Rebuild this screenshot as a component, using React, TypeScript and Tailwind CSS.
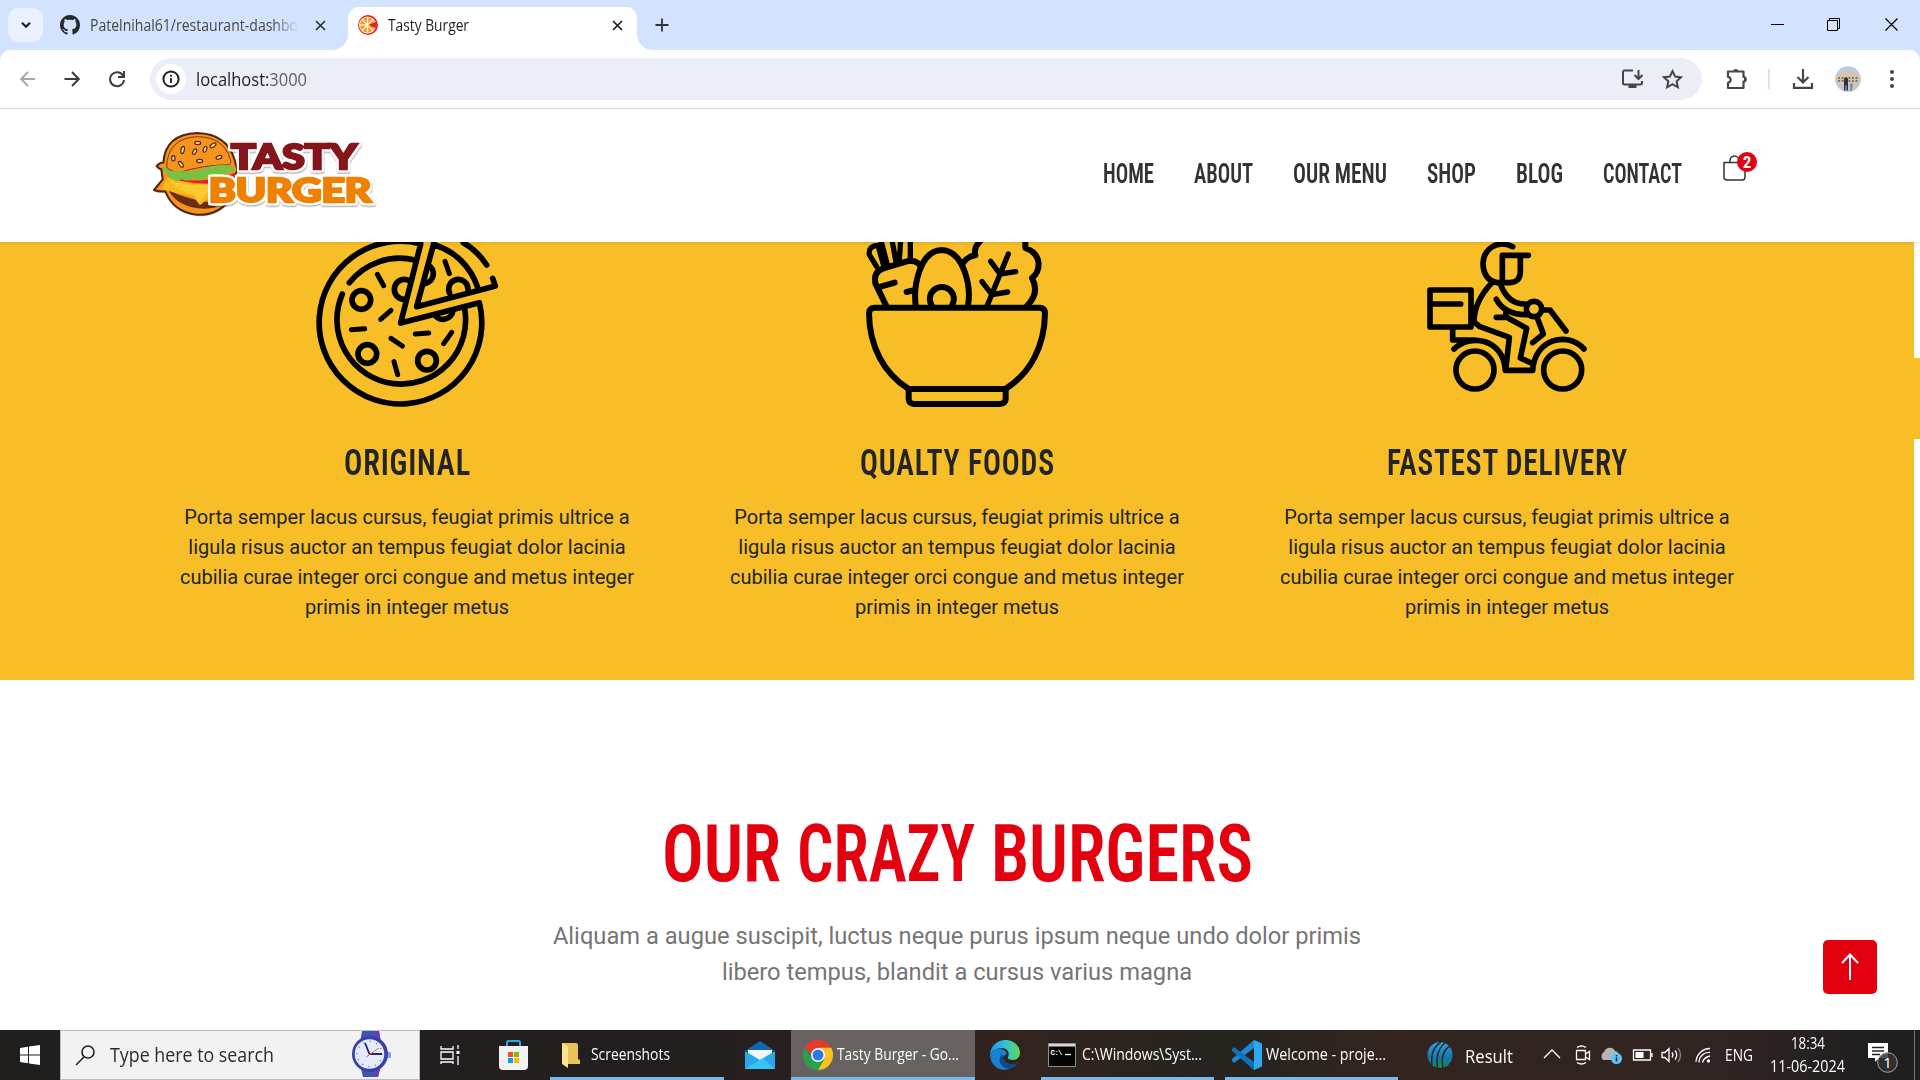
import { useLayoutEffect, useRef, type ReactNode } from "react";

/* Single line of text stretched horizontally to fill the width of its box. */
function Fit({ className, children }: { className: string; children: ReactNode }) {
  const box = useRef<HTMLSpanElement>(null);
  const ink = useRef<HTMLSpanElement>(null);
  useLayoutEffect(() => {
    if (!box.current || !ink.current) return;
    const k = box.current.offsetWidth / ink.current.getBoundingClientRect().width;
    ink.current.style.transform = `scaleX(${k})`;
  }, []);
  return (
    <span ref={box} className={`block shrink-0 whitespace-nowrap ${className}`}>
      <span ref={ink} className="inline-block origin-left">
        {children}
      </span>
    </span>
  );
}

const OSWALD = "font-['Roboto_Condensed','Roboto',sans-serif] [font-stretch:75%]";

function Citrus() {
  return (
    <svg className="size-5 shrink-0" viewBox="0 0 20 20">
      <circle cx="10" cy="10" r="10" fill="#e8202a" />
      <circle cx="9.6" cy="10" r="8.6" fill="#fff3df" />
      <circle cx="9.6" cy="10" r="7.6" fill="#fb9a1c" />
      <path d="M9.6 2v16M1.6 10h16M4 4.4l11.3 11.3M15.3 4.4L4 15.7" stroke="#fff3df" strokeWidth="1.3" />
      <path d="M10 10l8-3v6z" fill="#e8202a" />
    </svg>
  );
}

function TabStrip() {
  return (
    <div className="flex h-[50px] bg-[#d3e3fd]">
      <div className="mt-2 ml-2 flex h-[34px] w-[35px] items-center justify-center rounded-[11px] bg-[#ebf1fe]">
        <svg width="12" height="8" viewBox="0 0 12 8">
          <path d="M2 1.8l4 4 4-4" fill="none" stroke="#1f1f1f" strokeWidth="2.2" />
        </svg>
      </div>
      <div className="ml-[17px] flex h-[50px] w-[288px] items-center">
        <svg className="size-5 shrink-0" viewBox="0 0 16 16" fill="#24292f">
          <path d="M8 0C3.58 0 0 3.58 0 8c0 3.54 2.29 6.53 5.47 7.59.4.07.55-.17.55-.38 0-.19-.01-.82-.01-1.49-2.01.37-2.53-.49-2.69-.94-.09-.23-.48-.94-.82-1.13-.28-.15-.68-.52-.01-.53.63-.01 1.08.58 1.23.82.72 1.21 1.87.87 2.33.66.07-.52.28-.87.51-1.07-1.78-.2-3.64-.89-3.64-3.95 0-.87.31-1.59.82-2.15-.08-.2-.36-1.02.08-2.12 0 0 .67-.21 2.2.82.64-.18 1.32-.27 2-.27s1.36.09 2 .27c1.53-1.04 2.2-.82 2.2-.82.44 1.1.16 1.92.08 2.12.51.56.82 1.27.82 2.15 0 3.07-1.87 3.75-3.65 3.95.29.25.54.73.54 1.48 0 1.07-.01 1.93-.01 2.2 0 .21.15.46.55.38A8.01 8.01 0 0 0 16 8c0-4.42-3.58-8-8-8z" />
        </svg>
        <div className="mt-px ml-[10px] [mask-image:linear-gradient(to_right,#000_88%,transparent)]">
          <Fit className="w-[208px] text-[15.5px] text-[#474747]">Patelnihal61/restaurant-dashbo</Fit>
        </div>
        <svg className="ml-[17px]" width="11" height="11" viewBox="0 0 11 11">
          <path d="M1 1l9 9M10 1l-9 9" stroke="#333" strokeWidth="1.7" />
        </svg>
      </div>
      <div className="mt-[7px] flex">
        <svg className="-ml-4 self-end" width="16" height="16" viewBox="0 0 16 16">
          <path d="M16 0v16H0A16 16 0 0 0 16 0z" fill="#fff" />
        </svg>
        <div className="flex h-[43px] w-[289px] items-center rounded-t-[11px] bg-white pb-[7px] pl-[10px]">
          <Citrus />
          <Fit className="mt-[2px] ml-[10px] w-[81px] text-[15.5px] text-[#1f1f1f]">Tasty Burger</Fit>
          <svg className="ml-[143px]" width="11" height="11" viewBox="0 0 11 11">
            <path d="M1 1l9 9M10 1l-9 9" stroke="#1f1f1f" strokeWidth="1.7" />
          </svg>
        </div>
        <svg className="self-end" width="16" height="16" viewBox="0 0 16 16">
          <path d="M0 0v16h16A16 16 0 0 1 0 0z" fill="#fff" />
        </svg>
      </div>
      <svg className="mt-[18px] ml-[2px]" width="14" height="14" viewBox="0 0 14 14">
        <path d="M7 .5v13M.5 7h13" stroke="#333" strokeWidth="1.8" />
      </svg>
      <svg className="mt-4 mr-[21px] ml-auto" width="128" height="18" viewBox="0 0 128 18" fill="none" stroke="#000" strokeWidth="1">
        <path d="M0 8.500h13" />
        <path d="M56.500 4.500h10v10h-10zM58.500 4v-1.500h10v10H67" />
        <path d="M114.500 2.500l12 12M126.500 2.500l-12 12" strokeWidth="1.200" />
      </svg>
    </div>
  );
}

function Toolbar() {
  return (
    <div className="bg-[#d3e3fd]">
      <div className="flex h-[59px] items-center rounded-t-[10px] border-b border-[#dcdfe2] bg-white pl-5">
        <svg width="16" height="16" viewBox="0 0 16 16" fill="none" stroke="#a6a8ab" strokeWidth="1.9">
          <path d="M15 8H1.500M8 1L1.200 8l6.800 7" />
        </svg>
        <svg className="ml-[28px]" width="16" height="16" viewBox="0 0 16 16" fill="none" stroke="#3c3c3c" strokeWidth="2">
          <path d="M.500 8H14M8 1l6.800 7L8 15" />
        </svg>
        <svg className="ml-[28px]" width="18" height="18" viewBox="0 0 18 18" fill="none" stroke="#3c3c3c" strokeWidth="2">
          <path d="M15.200 5.800A7 7 0 1 0 16 10" />
          <path d="M16 1v6h-6" />
        </svg>
        <div className="ml-[24px] flex h-[42px] w-[1552px] items-center rounded-full bg-[#ebeef7] pl-[6px]">
          <div className="flex size-[30px] items-center justify-center rounded-full bg-white">
            <svg width="18" height="18" viewBox="0 0 18 18">
              <circle cx="9" cy="9" r="7.600" fill="none" stroke="#1f1f1f" strokeWidth="2" />
              <path d="M9 8v5M9 4.800v2" stroke="#1f1f1f" strokeWidth="1.800" />
            </svg>
          </div>
          <Fit className="ml-[10px] w-[111px] text-[18.5px] text-[#1f1f1f]">
            localhost:<span className="text-[#5c5f63]">3000</span>
          </Fit>
          <svg className="mr-[19px] ml-auto" width="63" height="22" viewBox="0 0 63 22" fill="none" stroke="#444746" strokeWidth="2">
            <path d="M13 2.500H4.500a1.500 1.500 0 0 0-1.500 1.500v11a1.500 1.500 0 0 0 1.500 1.500h16A1.500 1.500 0 0 0 22 15v-2" />
            <path d="M8.500 17h8v3h-8z" fill="#444746" strokeWidth="0" />
            <path d="M18.500 2v8M14.500 7l4 4 4-4" />
            <path d="M52.500 3l2.600 5.600 6 .6-4.500 4.100 1.300 6-5.400-3.100-5.400 3.100 1.300-6-4.500-4.100 6-.6z" strokeWidth="2" />
          </svg>
        </div>
        <svg className="ml-[24px]" width="24" height="24" viewBox="0 0 24 24" fill="none" stroke="#444746" strokeWidth="2.200">
          <path d="M2 4.500h15.500v5.500a2 2 0 0 1 0 4.500v6.500H2v-5.200c3.600-1 3.600-5 0-6z" strokeLinejoin="round" />
          <path d="M7 4a3 3 0 0 1 5.600 0zM18 9.500a3 3 0 0 1 0 5.600z" fill="#444746" strokeWidth="0" />
        </svg>
        <div className="ml-[18px] h-5 w-[2px] bg-[#d3e3fd]" />
        <svg className="ml-[22px]" width="22" height="22" viewBox="0 0 22 22" fill="none" stroke="#444746" strokeWidth="2.200">
          <path d="M11 1v13M5.500 9l5.500 5.500L16.500 9M2 15v4.800h18V15" />
        </svg>
        <svg className="ml-[21px]" width="26" height="26" viewBox="0 0 26 26">
          <clipPath id="avatar"><circle cx="13" cy="13" r="12.700" /></clipPath>
          <g clipPath="url(#avatar)">
            <path d="M0 0h26v26H0z" fill="#b9cdeb" />
            <path d="M0 9l4-1 3-3h12l3 3 4 1v9H0z" fill="#d9c4b2" />
            <path d="M3 12h20M3 15h20" stroke="#6d5a4c" strokeWidth="1.600" strokeDasharray="2 1.500" />
            <path d="M0 18h26v8H0z" fill="#c3c6cd" />
            <path d="M9 12.500q2-2 4 0v12h-1.500v-5h-1v5H9z" fill="#27304a" />
            <path d="M15 18q2-1 3 0l-1 7h-2z" fill="#84909a" />
          </g>
        </svg>
        <svg className="ml-[28px]" width="6" height="20" viewBox="0 0 6 20" fill="#444746">
          <circle cx="3" cy="3" r="2" /><circle cx="3" cy="10" r="2" /><circle cx="3" cy="17" r="2" />
        </svg>
      </div>
    </div>
  );
}

function Logo() {
  return (
    <svg className="mt-[11px] shrink-0" width="250" height="110" viewBox="0 0 750 330">
      <path d="M50 138Q62 126 70 128Q76 42 172 39Q262 42 284 120L292 150Q286 165 280 172L270 240Q230 288 170 284Q100 276 76 214Q56 216 42 210L68 178L64 148Q54 146 50 138z" fill="#b9b9b9" opacity="0.500" transform="translate(3 5)" />
      <path d="M50 138Q62 126 70 128Q76 42 172 39Q262 42 284 120L292 150Q286 165 280 172L270 240Q230 288 170 284Q100 276 76 214Q56 216 42 210L68 178L64 148Q54 146 50 138z" fill="#f6921e" stroke="#51250f" strokeWidth="6" strokeLinejoin="round" />
      <path d="M80 142Q82 54 172 50Q252 52 270 116Q276 130 268 134Q180 136 118 158Q92 154 80 142z" fill="#f7941d" stroke="#7a3910" strokeWidth="3" />
      <path d="M84 208Q130 236 204 246L230 262Q170 274 124 250Q98 236 84 208z" fill="#6b2c12" />
      <path d="M96 172Q180 196 286 158L284 184Q190 208 100 184z" fill="#e31e25" />
      <path d="M64 206L82 172Q150 196 232 190L210 230L180 256L160 230Q110 222 64 206z" fill="#fbb81c" />
      <path d="M90 184Q150 200 220 194L178 248L164 224Q120 216 90 184z" fill="#fdcb2f" />
      <path d="M66 138Q76 146 92 152Q170 158 206 140Q250 130 276 140Q288 148 278 158Q264 152 258 164Q242 158 236 168Q208 160 194 178Q174 188 162 172Q142 190 126 176Q110 190 100 178Q84 176 80 160Q68 156 66 138z" fill="#7ac143" />
      <g fill="#fbd59a" stroke="#51250f" strokeWidth="3.500">
        <ellipse cx="128" cy="90" rx="5" ry="11" transform="rotate(12 128 90)" />
        <ellipse cx="173" cy="69" rx="9" ry="5" />
        <ellipse cx="219" cy="76" rx="5" ry="10" transform="rotate(55 219 76)" />
        <ellipse cx="100" cy="115" rx="5" ry="8" />
        <ellipse cx="164" cy="95" rx="5" ry="9" transform="rotate(30 164 95)" />
        <ellipse cx="195" cy="88" rx="5" ry="9" transform="rotate(20 195 88)" />
        <ellipse cx="123" cy="133" rx="5" ry="10" transform="rotate(-35 123 133)" />
        <ellipse cx="179" cy="123" rx="9" ry="5" />
        <ellipse cx="237" cy="112" rx="9" ry="5" transform="rotate(-20 237 112)" />
      </g>
      <g
        className="font-['Lato'] font-black [filter:drop-shadow(6px_0_0_#fff)_drop-shadow(-6px_0_0_#fff)_drop-shadow(0_6px_0_#fff)_drop-shadow(0_-6px_0_#fff)_drop-shadow(1px_4px_2px_rgba(0,0,0,0.3))]"
        strokeWidth="7"
        strokeLinejoin="miter"
      >
        <text x="273" y="146" fontSize="100" textLength="378" lengthAdjust="spacingAndGlyphs" fill="#84161b" stroke="#84161b">TASTY</text>
        <text x="206" y="247" fontSize="97" textLength="488" lengthAdjust="spacingAndGlyphs" fill="#f08000" stroke="#f08000">BURGER</text>
      </g>
    </svg>
  );
}

function Header() {
  return (
    <header className="z-10 flex h-[133px] bg-white pl-[140px] shadow-[0_1px_4px_rgba(0,0,0,0.12)]">
      <Logo />
      <nav className={`mt-[45px] ml-[713px] flex gap-10 text-[27px] leading-[40px] font-semibold text-[#333] ${OSWALD}`}>
        <Fit className="w-[51px]">HOME</Fit>
        <Fit className="w-[59px]">ABOUT</Fit>
        <Fit className="w-[94px]">OUR MENU</Fit>
        <Fit className="w-[49px]">SHOP</Fit>
        <Fit className="w-[47px]">BLOG</Fit>
        <Fit className="w-[79px]">CONTACT</Fit>
      </nav>
      <div className="relative mt-[46px] ml-[41px] h-[27px] w-[36px]">
        <svg width="24" height="27" viewBox="0 0 24 27" fill="none" stroke="#333" strokeWidth="1.500">
          <path d="M1 7.500h21v14.500a3 3 0 0 1-3 3H4a3 3 0 0 1-3-3z" />
          <path d="M7 7V5.500a4.500 4.500 0 0 1 9 0V7" />
        </svg>
        <div className={`absolute -top-[3px] left-[14px] flex size-5 items-center justify-center rounded-full bg-[#e3000f] text-[17px] leading-none font-bold text-white ${OSWALD}`}>2</div>
      </div>
    </header>
  );
}

function Pizza() {
  return (
    <svg width="220" height="178" viewBox="-9 36 660 534" fill="none" stroke="#000" strokeWidth="17" strokeLinecap="round" strokeLinejoin="round">
      <path d="M360 41A244 244 0 1 0 538 218L302 279L362 42" />
      <path d="M344 90A193 193 0 0 0 148 158M127 192A193 193 0 1 0 494 236" />
      <path d="M410 8L350 230L586 168L578 145M402 44A196 196 0 0 1 532 170M490 38Q530 60 560 105" />
      <circle cx="184" cy="210" r="28" /><circle cx="202" cy="372" r="28" /><circle cx="381" cy="392" r="28" />
      <path d="M328 152A30 30 0 1 0 314 208M385 106A29 29 0 0 1 376 160M449 190A29 29 0 1 1 504 178M404 254A30 30 0 0 0 459 242" />
      <path d="M232 133l19 34M273 241l-31 27M154 299l40-3M273 325l34 23M282 395l11 39M346 312l40-3M455 307l-24 34M435 94l13 37" strokeWidth="15" />
    </svg>
  );
}

function Bowl() {
  return (
    <svg width="220" height="178" viewBox="-9 36 660 534" fill="none" stroke="#000" strokeWidth="18" strokeLinecap="round" strokeLinejoin="round">
      <path d="M72 233H570Q585 234 585 250C584 350 540 430 466 477H176C102 430 58 350 57 250Q58 234 72 233z" />
      <path d="M176 478V508Q178 521 192 522H450Q465 521 467 508V478" />
      <path d="M108 226L76 160Q70 126 98 116L178 92Q200 92 208 104M92 170L134 158M170 186L190 181" />
      <path d="M80 110L58 74Q54 48 84 46L102 110M94 36L112 104M126 30L138 96M152 30L148 90M181 30V86" strokeWidth="16" />
      <path d="M197 226C190 170 208 62 275 60C342 62 364 170 354 226M245 226A36 36 0 1 1 306 226" />
      <path d="M340 98Q352 80 376 76Q370 54 390 34M526 30V54Q562 66 566 100Q566 130 546 144Q570 188 532 226" />
      <path d="M412 226L475 72M422 94L450 132L497 125M396 155L426 194L473 186" strokeWidth="16" />
    </svg>
  );
}

function Scooter() {
  return (
    <svg width="220" height="178" viewBox="-39 36 660 534" fill="none" stroke="#000" strokeWidth="17" strokeLinecap="round" strokeLinejoin="round">
      <circle cx="195" cy="420" r="57" /><circle cx="458" cy="420" r="57" />
      <path d="M60 180H183V291H60zM64 222H152" />
      <path d="M128 294V330H192M132 357C180 310 280 325 286 421H368C372 330 470 300 522 357" />
      <path d="M308 50C260 26 220 60 219 100Q220 150 262 158H300Q330 156 331 126V78M355 76H277V156" />
      <path d="M246 158C208 198 192 240 192 276L210 290L298 322L288 412M272 164Q294 222 345 222M259 208Q284 254 350 254M288 246L287 262M259 262H290L350 295L331 384L370 402" />
      <circle cx="372" cy="237" r="23" />
      <path d="M396 240H420L468 303M382 264L400 312L368 338" />
    </svg>
  );
}

function Feature({ icon, title }: { icon: ReactNode; title: ReactNode }) {
  return (
    <div className="flex w-[550px] flex-col items-center">
      {icon}
      <h5 className={`mt-[15px] text-[37px] leading-[56px] font-semibold tracking-[1px] text-[#212529] ${OSWALD}`}>{title}</h5>
      <p className="mt-[11px] text-center font-['Roboto',sans-serif] text-[20px] leading-[30px] whitespace-nowrap text-[#212529]">
        Porta semper lacus cursus, feugiat primis ultrice a<br />
        ligula risus auctor an tempus feugiat dolor lacinia<br />
        cubilia curae integer orci congue and metus integer<br />
        primis in integer metus
      </p>
    </div>
  );
}

function Page() {
  return (
    <main className="flex h-[788px] bg-white">
      <div className="w-[1914px]">
        <section className="flex h-[438px] justify-center bg-[#f7be27]">
          <Feature icon={<Pizza />} title={<Fit className="w-[127px]">ORIGINAL</Fit>} />
          <Feature icon={<Bowl />} title={<Fit className="w-[195px]">QUALTY FOODS</Fit>} />
          <Feature icon={<Scooter />} title={<Fit className="w-[241px]">FASTEST DELIVERY</Fit>} />
        </section>
        <section className="flex flex-col items-center pt-[114px]">
          <h2 className={`flex gap-4 text-[80px] leading-[120px] font-semibold text-[#e3000f] ${OSWALD}`}>
            <Fit className="w-[119px]">OUR</Fit>
            <Fit className="w-[178px]">CRAZY</Fit>
            <Fit className="w-[262px]">BURGERS</Fit>
          </h2>
          <p className="mt-[4px] text-center font-['Roboto',sans-serif] text-[23.7px] leading-[36px] whitespace-nowrap text-[#757575]">
            Aliquam a augue suscipit, luctus neque purus ipsum neque undo dolor primis<br />
            libero tempus, blandit a cursus varius magna
          </p>
        </section>
      </div>
      <div className="mt-[116px] h-[81px] w-[6px] bg-[#f7be27]" />
      <button className="fixed top-[940px] left-[1823px] flex size-[54px] items-center justify-center rounded-[5px] bg-[#e3000f]">
        <svg width="18" height="28" viewBox="0 0 18 28" fill="none" stroke="#fff" strokeWidth="2">
          <path d="M9 27V2M1 10l8-8.500L17 10" />
        </svg>
      </button>
    </main>
  );
}

function Watch() {
  return (
    <svg width="42" height="48" viewBox="0 0 42 48">
      <path d="M12 1h17l2 12H10zM10 35h21l-3 12H13z" fill="#3a55b4" />
      <path d="M24 1h5l2 12h-4zM26 35h5l-3 12h-4z" fill="#6a3fb5" />
      <rect x="37" y="22" width="4" height="6" rx="1" fill="#8f9ede" />
      <circle cx="20" cy="24" r="18" fill="#3b3fa6" />
      <circle cx="19.500" cy="24" r="14.800" fill="#e4ebff" />
      <circle cx="19.500" cy="24" r="12.500" fill="none" stroke="#6b75b5" strokeWidth="1.500" strokeDasharray="1 5.540" />
      <path d="M15 13l4.500 11H32" fill="none" stroke="#23265f" strokeWidth="1.800" />
      <path d="M16 27l13-9" stroke="#e55b5b" strokeWidth="1" />
    </svg>
  );
}

function Taskbar() {
  return (
    <footer className="flex h-[50px] items-center bg-[linear-gradient(to_right,#211f1e_0%,#231f1f_36%,#33231f_53%,#25241f_64%,#33241f_72%,#302422_90%,#1f1f1f_98%)] text-white">
      <svg className="ml-5" width="20" height="20" viewBox="0 0 20 20" fill="#fff">
        <path d="M0 3l8-1.200v7.700H0zM9 1.600L20 0v9.500H9zM0 10.500h8v7.700L0 17zM9 10.500h11V20L9 18.400z" />
      </svg>
      <div className="ml-5 flex h-[50px] w-[360px] items-center border border-[#bdbdbd] bg-[#f2f2f2] pl-[14px]">
        <svg width="20" height="21" viewBox="0 0 20 21" fill="none" stroke="#222" strokeWidth="1.600">
          <circle cx="13" cy="7" r="6" />
          <path d="M9 12L1 20" />
        </svg>
        <Fit className="ml-[15px] w-[164px] text-[19.5px] text-[#2b2b2b]">Type here to search</Fit>
        <div className="ml-[76px] pb-[2px]"><Watch /></div>
      </div>
      <svg className="ml-5" width="21" height="20" viewBox="0 0 21 20" fill="none" stroke="#fff" strokeWidth="1.300">
        <path d="M1 1v3h12V1M1 7h12v7H1zM1 19v-2h12v2M18 0v4M18 11v9" />
        <path d="M16.500 6h3v3h-3z" fill="#fff" strokeWidth="0" />
      </svg>
      <svg className="ml-[38px]" width="29" height="30" viewBox="0 0 29 30">
        <path d="M8 7V2.500Q8 1 9.500 1h10Q21 1 21 2.500V7" fill="none" stroke="#29a8e0" strokeWidth="2" />
        <path d="M0 6h29v20a4 4 0 0 1-4 4H4a4 4 0 0 1-4-4z" fill="#f2f2f2" />
        <path d="M9 12h5v5H9z" fill="#f04e23" /><path d="M15 12h5v5h-5z" fill="#7fb900" />
        <path d="M9 18h5v5H9z" fill="#00a3ee" /><path d="M15 18h5v5h-5z" fill="#fdb900" />
      </svg>
      <div className="ml-[22px] flex h-[50px] w-[174px] items-center border-b-[3px] border-[#76b9ed] pt-[3px] pl-3">
        <svg width="18" height="26" viewBox="0 0 18 26">
          <path d="M0 1h14q2 0 2 2v14l2 1v4H4z" fill="#eac257" />
          <path d="M0 1l6 4v21l-6-4z" fill="#fde28f" />
        </svg>
        <Fit className="ml-[11px] w-[79px] text-[15.5px]">Screenshots</Fit>
      </div>
      <svg className="ml-[21px]" width="30" height="28" viewBox="0 0 30 28">
        <path d="M0 10L15 0l15 10z" fill="#1066b5" />
        <path d="M3 9h24v12H3z" fill="#f4f6f8" />
        <path d="M0 10l15 9 15-9v18H0z" fill="#28a8ea" />
        <path d="M0 28l18-11 12 11z" fill="#35c4f3" />
      </svg>
      <div className="ml-4 flex h-[50px] w-[184px] items-center border-b-[3px] border-[#76b9ed] bg-[#686361] pt-[3px] pl-3">
        <svg width="30" height="30" viewBox="0 0 30 30">
          <path d="M15 15L2 7.500A15 15 0 0 1 28 7.500z" fill="#e33b2e" />
          <path d="M28 7.500A15 15 0 0 1 15 30l6.500-11.200L15 7.500z" fill="#fcc31e" />
          <path d="M2 7.500l6.500 11.200L15 22l6.200-3L15 30A15 15 0 0 1 2 7.500z" fill="#2aa14b" />
          <path d="M2 7.500A15 15 0 0 1 28 7.500H15l-5 9z" fill="#e33b2e" />
          <circle cx="15" cy="15" r="7" fill="#fff" /><circle cx="15" cy="15" r="5.500" fill="#2f78e8" />
        </svg>
        <Fit className="ml-1 w-[122px] text-[15.5px]">Tasty Burger - Go...</Fit>
      </div>
      <svg className="ml-[15px]" width="30" height="30" viewBox="0 0 30 30">
        <defs>
          <linearGradient id="edgeTop" x1="0" x2="1"><stop offset="0" stopColor="#2390dc" /><stop offset="0.500" stopColor="#2fc2df" /><stop offset="1" stopColor="#62d84a" /></linearGradient>
        </defs>
        <path d="M0 14C1 5 8 0 15 0c9 0 15 6 15 13 0 4-3 7-7 7-3 0-6-1-5-3 2-3 0-9-6-9-5 0-10 3-12 6z" fill="url(#edgeTop)" />
        <path d="M0 14c2-4 7-6 11-5 4 1 6 3 6 5-8 3-8 13 4 14-9 5-21-1-21-14z" fill="#1683d4" />
        <path d="M12 14c-5 5-2 14 6 14.500 4 0 8-2 10-6-8 4-15 0-16-8.500z" fill="#114a8b" />
      </svg>
      <div className="ml-[21px] flex h-[50px] w-[173px] items-center border-b-[3px] border-[#76b9ed] pt-[3px] pl-[7px]">
        <svg width="28" height="24" viewBox="0 0 28 24">
          <path d="M.500.500h27v23H.500z" fill="#050505" stroke="#8f8f8f" />
          <path d="M1 1h26v2.500H1z" fill="#d8d8d8" />
          <text x="2.500" y="12" fontSize="7.500" fontWeight="700" fill="#fff" className="font-['Liberation_Mono']" textLength="12">C:\</text>
          <path d="M17 11.500h6" stroke="#fff" strokeWidth="1.300" />
        </svg>
        <Fit className="ml-[6px] w-[120px] text-[15.5px]">C:\Windows\Syst...</Fit>
      </div>
      <div className="ml-[11px] flex h-[50px] w-[173px] items-center border-b-[3px] border-[#76b9ed] pt-[3px] pl-[7px]">
        <svg width="30" height="30" viewBox="0 0 30 30">
          <path d="M22 8L2 23l-2-2v-2L22 0z" fill="#1e88d2" />
          <path d="M22 22L2 7 0 9v2l22 19z" fill="#1272b8" />
          <path d="M22 0l8 3.500v23L22 30z" fill="#2fa8f2" />
        </svg>
        <Fit className="ml-1 w-[120px] text-[15.5px]">Welcome - proje...</Fit>
      </div>
      <svg className="ml-[29px]" width="26" height="28" viewBox="0 0 26 28" fill="none">
        <defs><linearGradient id="ball" x2="0" y2="1"><stop offset="0" stopColor="#2aa3e8" /><stop offset="0.600" stopColor="#1479ae" /><stop offset="1" stopColor="#128a52" /></linearGradient></defs>
        <ellipse cx="13" cy="14" rx="12.500" ry="13" fill="url(#ball)" />
        <path d="M14 1Q3 8 5 24M18 2Q8 10 10.500 27M23 5Q13 11 16 27" stroke="#2b2322" strokeWidth="1.500" />
      </svg>
      <Fit className="mt-px ml-[12px] w-[48px] text-[18.5px]">Result</Fit>
      <svg className="ml-[30px]" width="168" height="22" viewBox="0 0 168 22" fill="none" stroke="#fff" strokeWidth="1.300">
        <path d="M1 14l8-8 8 8" />
        <path d="M33.500 6.500h9v9h-9zM42.500 10l4-2.500v8l-4-2.500M34 3.500q4.500-3 9 0M34 18.500q4.500 3 9 0" />
        <path d="M60 16a5 5 0 0 1 1-8 6 6 0 0 1 11-1 5 5 0 0 1 4 5v4z" fill="#b4b4b4" strokeWidth="0" />
        <circle cx="73.500" cy="14.500" r="5.500" fill="#5cc5f8" strokeWidth="0" />
        <path d="M73.500 13.500v4M73.500 11v1.500" stroke="#10222e" strokeWidth="1.500" />
        <path d="M90.500 6h17v10h-17zM109 9v4" />
        <path d="M92.500 8h8v6h-8z" fill="#fff" strokeWidth="0" />
        <path d="M119 8.500h3l4-4v13l-4-4h-3zM129 8.500q2 2.500 0 5M132 6.500q3.500 4.500 0 9" />
        <path d="M135 4q5 7 0 14" stroke="#8c8482" />
        <path d="M153 18A14 14 0 0 1 167 4.500M156 18.500A10 10 0 0 1 167 8.500M159.500 18.500q1-5 7.500-6.500" />
        <circle cx="165.500" cy="17" r="1.700" fill="#fff" strokeWidth="0" />
      </svg>
      <Fit className="ml-[14px] w-[28px] text-[16px]">ENG</Fit>
      <div className="ml-[17px] flex w-[75px] flex-col items-center text-[15.5px] leading-[23px]">
        <Fit className="w-[34px]">18:34</Fit>
        <Fit className="w-[75px]">11-06-2024</Fit>
      </div>
      <svg className="mt-[8px] ml-[22px]" width="32" height="34" viewBox="0 0 32 34">
        <path d="M1 1h20v15h-9l-4 4v-4H1z" fill="#fff" />
        <path d="M5 5.500h12M5 9h12M5 12.500h8" stroke="#222" strokeWidth="1.300" />
        <circle cx="20.500" cy="20.500" r="9.800" fill="#343232" fillOpacity="0.850" stroke="#aaa" />
        <text x="20.500" y="26" fontSize="15" fill="#fff" textAnchor="middle">1</text>
      </svg>
      <div className="ml-auto mr-[5px] h-[50px] w-px bg-[#777]" />
    </footer>
  );
}

export default function App() {
  return (
    <div className="flex h-[1080px] w-[1920px] flex-col overflow-hidden bg-white font-['Open_Sans','Noto_Sans',sans-serif]">
      <TabStrip />
      <Toolbar />
      <Header />
      <Page />
      <Taskbar />
    </div>
  );
}
